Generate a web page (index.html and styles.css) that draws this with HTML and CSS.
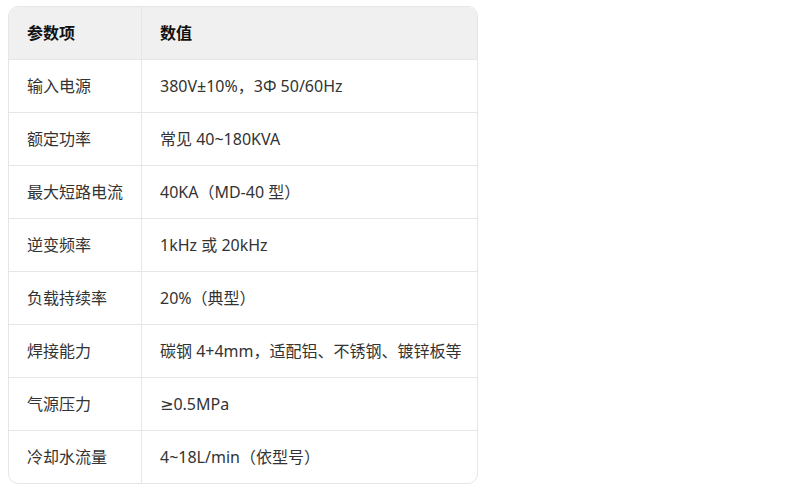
FILE: index.html
```html
<!DOCTYPE html>
<html lang="zh-CN">
<head>
<meta charset="utf-8">
<link rel="stylesheet" href="styles.css">
</head>
<body>
<div class="table-wrap">
  <table class="params">
    <thead>
      <tr><th class="c1">参数项</th><th>数值</th></tr>
    </thead>
    <tbody>
      <tr><td class="c1">输入电源</td><td>380V±10%，3Φ 50/60Hz</td></tr>
      <tr><td class="c1">额定功率</td><td>常见 40~180KVA</td></tr>
      <tr><td class="c1">最大短路电流</td><td>40KA（MD-40 型）</td></tr>
      <tr><td class="c1">逆变频率</td><td>1kHz 或 20kHz</td></tr>
      <tr><td class="c1">负载持续率</td><td>20%（典型）</td></tr>
      <tr><td class="c1">焊接能力</td><td>碳钢 4+4mm，适配铝、不锈钢、镀锌板等</td></tr>
      <tr><td class="c1">气源压力</td><td>≥0.5MPa</td></tr>
      <tr><td class="c1">冷却水流量</td><td>4~18L/min（依型号）</td></tr>
    </tbody>
  </table>
</div>
</body>
</html>
```
FILE: styles.css
```css
html, body {
  background: #ffffff;
}
body {
  margin: 6px 8px;
  font-family: "Noto Sans", "DejaVu Sans", "Noto Sans CJK SC", sans-serif;
  font-size: 16px;
  color: #333333;
}
.table-wrap {
  display: inline-block;
  width: 470px;
  box-sizing: border-box;
  border: 1px solid #e6e6e6;
  border-radius: 10px;
  overflow: hidden;
}
.params {
  width: 100%;
  border-collapse: collapse;
  table-layout: fixed;
}
.params th,
.params td {
  text-align: left;
  padding: 14px 18px;
  line-height: 24px;
  vertical-align: middle;
  white-space: nowrap;
}
.params th {
  background: #f0f0f0;
  font-weight: bold;
  color: #111111;
}
.params .c1 {
  width: 96px;
  border-right: 1px solid #e6e6e6;
}
.params tr {
  border-bottom: 1px solid #e6e6e6;
}
.params tbody tr:last-child {
  border-bottom: none;
}
```
